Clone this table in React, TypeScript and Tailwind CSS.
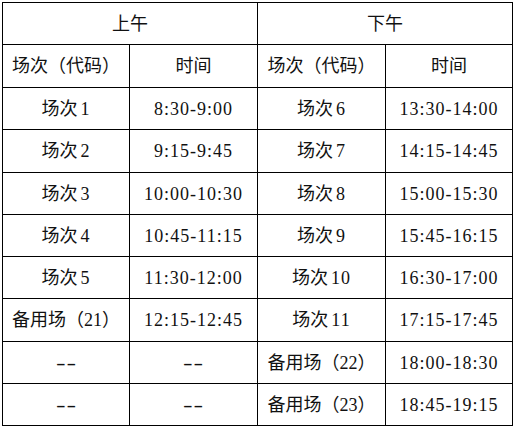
import { Fragment } from "react";

const AM = [
  ["场次1", "8:30-9:00"],
  ["场次2", "9:15-9:45"],
  ["场次3", "10:00-10:30"],
  ["场次4", "10:45-11:15"],
  ["场次5", "11:30-12:00"],
  ["备用场（21）", "12:15-12:45"],
  ["--", "--"],
  ["--", "--"],
];

const PM = [
  ["场次6", "13:30-14:00"],
  ["场次7", "14:15-14:45"],
  ["场次8", "15:00-15:30"],
  ["场次9", "15:45-16:15"],
  ["场次10", "16:30-17:00"],
  ["场次11", "17:15-17:45"],
  ["备用场（22）", "18:00-18:30"],
  ["备用场（23）", "18:45-19:15"],
];

const cell = "bg-white flex items-center justify-center whitespace-nowrap";

function Dash() {
  return (
    <div className={cell}>
      <span className="inline-block scale-x-[1.6] tracking-[0.5px]">--</span>
    </div>
  );
}

function Name({ text }: { text: string }) {
  if (text === "--") return <Dash />;
  const m = text.match(/^(场次)(\d+)$/);
  if (m)
    return (
      <div className={cell}>
        {m[1]}
        <span className="ml-[3px] tracking-[1px]">{m[2]}</span>
      </div>
    );
  return <div className={cell}>{text}</div>;
}

function Time({ text }: { text: string }) {
  if (text === "--") return <Dash />;
  return <div className={`${cell} tracking-[1px]`}>{text}</div>;
}

export default function App() {
  return (
    <div
      className="w-[516px] h-[428px] bg-white text-[18px] leading-none text-[#111]"
      style={{ fontFamily: '"Liberation Serif", "Noto Sans CJK SC", serif' }}
    >
      <div className="ml-[2px] pt-[2px]">
        <div className="inline-grid bg-black p-px gap-px grid-cols-[126px_127px_127px_126px] grid-rows-[41px_42px_41px_42px_41px_41px_41px_42px_41px_41px]">
          <div className={`${cell} col-span-2`}>上午</div>
          <div className={`${cell} col-span-2`}>下午</div>
          <div className={cell}>场次（代码）</div>
          <div className={cell}>时间</div>
          <div className={cell}>场次（代码）</div>
          <div className={cell}>时间</div>
          {AM.map((row, i) => (
            <Fragment key={i}>
              <Name text={row[0]} />
              <Time text={row[1]} />
              <Name text={PM[i][0]} />
              <Time text={PM[i][1]} />
            </Fragment>
          ))}
        </div>
      </div>
    </div>
  );
}
